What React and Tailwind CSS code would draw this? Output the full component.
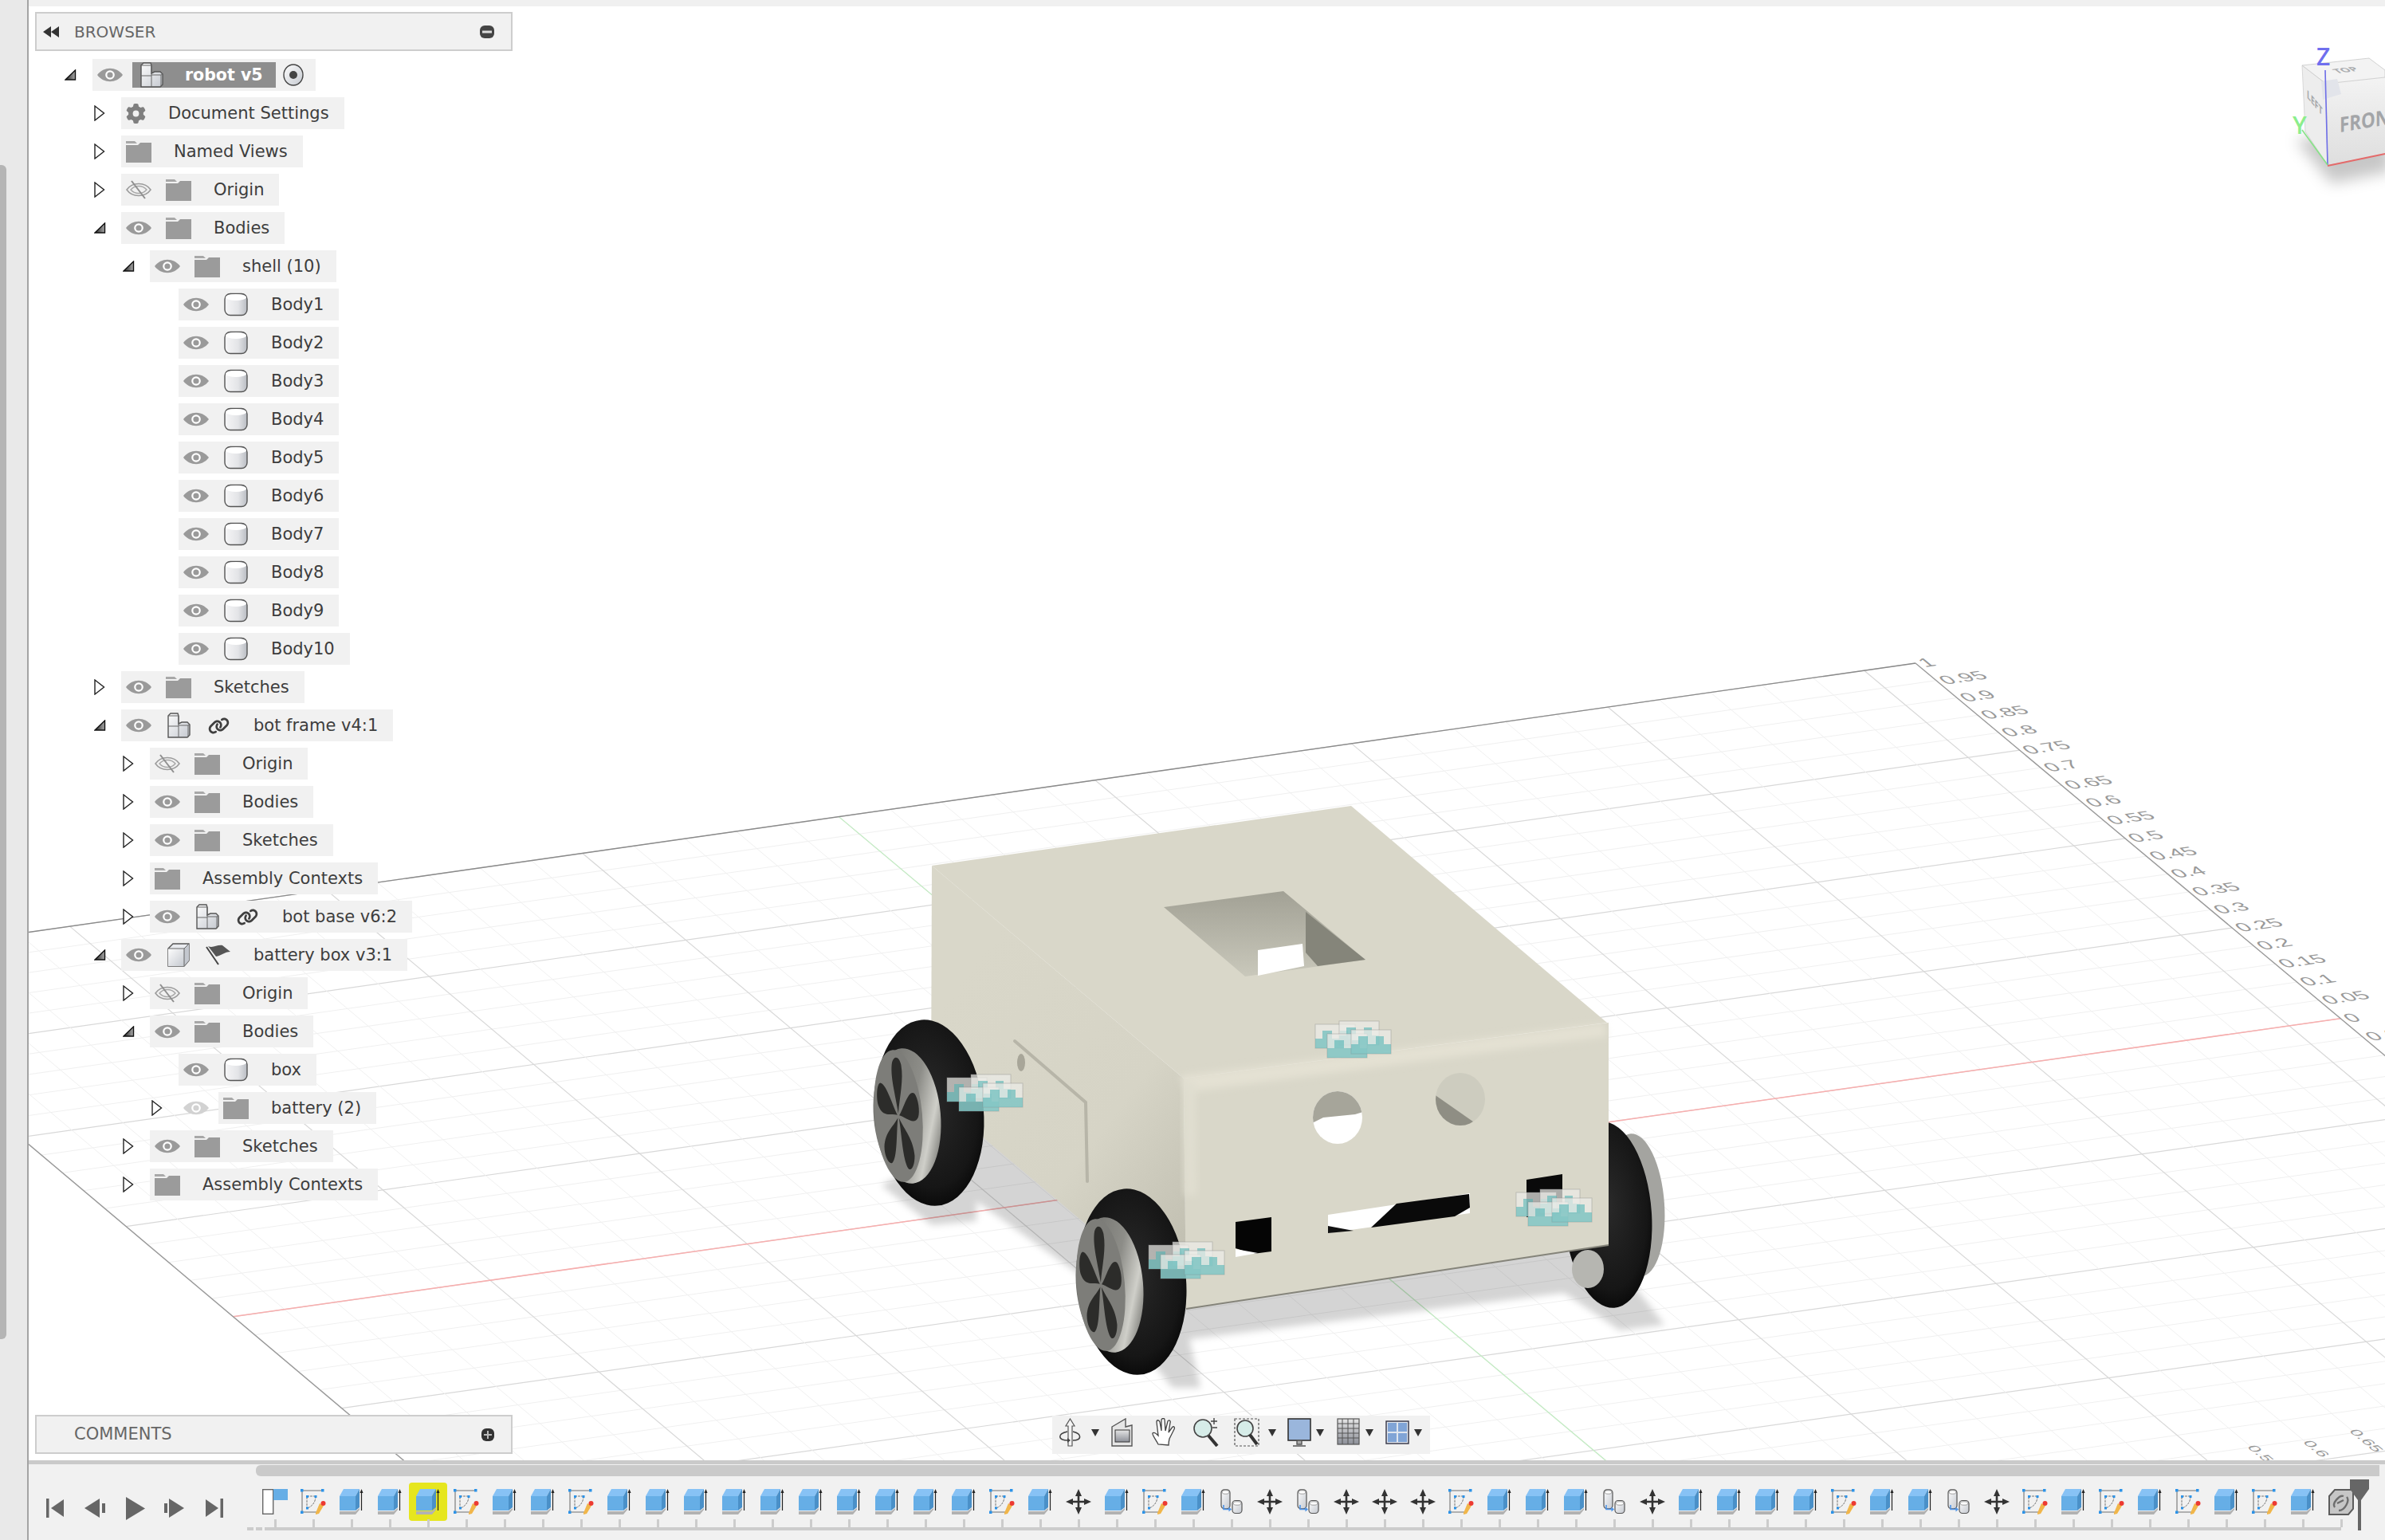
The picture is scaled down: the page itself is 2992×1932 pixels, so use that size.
import { FaGear, FaLink } from 'react-icons/fa6'

// ---- tree data ----
const TREE = [
  { lv: 0, arrow: 'open', root: true, label: 'robot v5' },
  { lv: 1, arrow: 'closed', icons: ['gear'], label: 'Document Settings' },
  { lv: 1, arrow: 'closed', icons: ['folder'], label: 'Named Views' },
  { lv: 1, arrow: 'closed', eye: 'off', icons: ['folder'], label: 'Origin' },
  { lv: 1, arrow: 'open', eye: 'on', icons: ['folder'], label: 'Bodies' },
  { lv: 2, arrow: 'open', eye: 'on', icons: ['folder'], label: 'shell (10)' },
  ...[1, 2, 3, 4, 5, 6, 7, 8, 9, 10].map((n) => ({ lv: 3, eye: 'on', icons: ['cyl'], label: `Body${n}` })),
  { lv: 1, arrow: 'closed', eye: 'on', icons: ['folder'], label: 'Sketches' },
  { lv: 1, arrow: 'open', eye: 'on', icons: ['comp', 'link'], label: 'bot frame v4:1' },
  { lv: 2, arrow: 'closed', eye: 'off', icons: ['folder'], label: 'Origin' },
  { lv: 2, arrow: 'closed', eye: 'on', icons: ['folder'], label: 'Bodies' },
  { lv: 2, arrow: 'closed', eye: 'on', icons: ['folder'], label: 'Sketches' },
  { lv: 2, arrow: 'closed', icons: ['folder'], label: 'Assembly Contexts' },
  { lv: 2, arrow: 'closed', eye: 'on', icons: ['comp', 'link'], label: 'bot base v6:2' },
  { lv: 1, arrow: 'open', eye: 'on', icons: ['cube', 'flag'], label: 'battery box v3:1' },
  { lv: 2, arrow: 'closed', eye: 'off', icons: ['folder'], label: 'Origin' },
  { lv: 2, arrow: 'open', eye: 'on', icons: ['folder'], label: 'Bodies' },
  { lv: 3, eye: 'on', icons: ['cyl'], label: 'box' },
  { lv: 3, arrow: 'closed', eye: 'dim', icons: ['folder'], label: 'battery (2)' },
  { lv: 2, arrow: 'closed', eye: 'on', icons: ['folder'], label: 'Sketches' },
  { lv: 2, arrow: 'closed', icons: ['folder'], label: 'Assembly Contexts' },
]

const INDENT = ['w-[80px]', 'w-[116px]', 'w-[152px]', 'w-[188px]']

// timeline: f flag, s sketch, e extrude, m move, j joint, l link
const STEPS = 'fseeeseeseeeeeeeeeesemesejmjmmmseeejmeeeeseejmsesesesel'.split('')

// ---- tree icons ----
function Arrow({ open }) {
  if (open) {
    return (
      <svg width="15" height="14" viewBox="0 0 15 14">
        <path d="M1 13 L13.5 1 V13 Z" fill="url(#arrowFill)" stroke="#111" strokeWidth="1.4" />
      </svg>
    )
  }
  return (
    <svg width="14" height="20" viewBox="0 0 14 20">
      <path d="M1 1 L12.5 10 L1 19 Z" fill="#fff" stroke="#222" strokeWidth="1.4" />
    </svg>
  )
}

function Eye({ state }) {
  if (state === 'off') {
    return (
      <svg width="32" height="24" viewBox="0 0 32 24" className="shrink-0">
        <path d="M1 12 C8 2 24 2 31 12 C24 22 8 22 1 12 Z" fill="none" stroke="#9c9c9c" strokeWidth="1.6" />
        <path d="M6 12 C11 6 21 6 26 12 C21 18 11 18 6 12 Z" fill="none" stroke="#a8a8a8" strokeWidth="1.4" />
        <path d="M7 1 L24 23" stroke="#8f8f8f" strokeWidth="2" />
      </svg>
    )
  }
  const c = state === 'dim' ? '#d2d2d2' : '#9a9a9a'
  return (
    <svg width="32" height="24" viewBox="0 0 32 24" className="shrink-0">
      <path d="M0 12 C8 1 24 1 32 12 C24 23 8 23 0 12 Z" fill={c} />
      <circle cx="16" cy="12" r="5.8" fill="#fff" />
      <circle cx="16" cy="12" r="3.6" fill={c} />
    </svg>
  )
}

function Folder() {
  return (
    <svg width="32" height="27" viewBox="0 0 32 27" className="shrink-0">
      <path d="M0 0 H11 L14 3 H0 Z" fill="#a8a8a8" />
      <path d="M0 5 H15 L18 2 H32 V27 H0 Z" fill="#9b9b9b" />
    </svg>
  )
}

function Cyl() {
  return (
    <svg width="32" height="30" viewBox="0 0 32 30" className="shrink-0">
      <rect x="2" y="1.5" width="28" height="27" rx="7" fill="url(#cylBody)" stroke="#555" strokeWidth="1.4" />
      <ellipse cx="16" cy="6" rx="13" ry="4" fill="#fff" />
    </svg>
  )
}

function Comp() {
  return (
    <svg width="32" height="32" viewBox="0 0 32 32" className="shrink-0">
      <path d="M3 4 L6 1 H15 L16 4 V14 L20 12 H27 L30 15 V28 L27 31 H3 Z" fill="url(#cylFill)" stroke="#555" strokeWidth="1.4" />
      <path d="M3 4 H16 M3 17 H16 M16 4 V31 M16 16 H28 V31 M28 16 L30 15" stroke="#666" strokeWidth="1" fill="none" />
    </svg>
  )
}

function Cube() {
  return (
    <svg width="32" height="30" viewBox="0 0 32 30" className="shrink-0">
      <path d="M3 7 L9 1 H29 V22 L23 29 H3 Z" fill="#e9ebef" stroke="#555" strokeWidth="1.4" />
      <path d="M3 7 H23 V29 H3 Z" fill="url(#cylFill)" />
      <path d="M23 7 L29 1 V22 L23 29 Z" fill="#c3c7ce" />
      <path d="M3 7 H23 V29 M23 7 L29 1" stroke="#666" strokeWidth="1" fill="none" />
    </svg>
  )
}

function Flag() {
  return (
    <svg width="32" height="26" viewBox="0 0 32 26" className="shrink-0">
      <path d="M1 3 L16 25" stroke="#444" strokeWidth="2" />
      <path d="M3 2 C9 5 14 0 21 1 L31 9 C24 9 19 14 13 15 Z" fill="#555" />
    </svg>
  )
}

function TreeIcon({ name }) {
  if (name === 'folder') return <Folder />
  if (name === 'cyl') return <Cyl />
  if (name === 'comp') return <Comp />
  if (name === 'cube') return <Cube />
  if (name === 'flag') return <Flag />
  if (name === 'gear') return <FaGear className="h-[27px] w-[25px] shrink-0 text-[#7f7f7f]" />
  return (
    <span className="flex w-8 shrink-0 justify-center">
      <FaLink className="h-[27px] w-[27px] text-[#3f3f3f]" />
    </span>
  )
}

function RootRow() {
  return (
    <div className="flex h-10 items-center">
      <div className="w-[80px] shrink-0 pl-[45px]">
        <Arrow open />
      </div>
      <div className="flex h-full items-center bg-[#f1f1f1] pl-1.5 pr-[15px]">
        <Eye state="on" />
        <div className="ml-3 flex h-8 w-[180px] items-center bg-[#8e8e8e] pl-2">
          <Comp />
          <span className="ml-[26px] text-[20.5px] font-bold text-white">robot v5</span>
        </div>
        <svg width="26" height="28" viewBox="0 0 26 28" className="ml-[9px]">
          <ellipse cx="13" cy="14" rx="12" ry="13" fill="url(#cylFill)" stroke="#444" strokeWidth="1.4" />
          <circle cx="13" cy="14" r="5" fill="#444" />
        </svg>
      </div>
    </div>
  )
}

function TreeRow({ row }) {
  if (row.root) return <RootRow />
  const dim = row.eye === 'dim'
  return (
    <div className="flex h-10 items-center">
      <div className={`${INDENT[row.lv]} flex shrink-0 items-center pl-[2px]`}>
        <div className="ml-auto w-[35px] pl-[1px]">{row.arrow && <Arrow open={row.arrow === 'open'} />}</div>
      </div>
      {dim && (
        <div className="ml-1.5 mr-3">
          <Eye state="dim" />
        </div>
      )}
      <div className="flex h-full items-center gap-[18px] bg-[#f1f1f1] pl-1.5 pr-[19px]">
        {row.eye && !dim && <Eye state={row.eye} />}
        {row.icons.map((ic, i) => (
          <TreeIcon key={i} name={ic} />
        ))}
        <span className="ml-2.5 mt-[2px] whitespace-nowrap text-[21px] text-[#3d3d3d]">{row.label}</span>
      </div>
    </div>
  )
}

// ---- timeline icons ----
function Extrude() {
  return (
    <svg width="32" height="32" viewBox="0 0 32 32">
      <path d="M1 9 L6 0 H26 L21 9 Z" fill="#87c2f5" />
      <path d="M1 9 H21 V27 H1 Z" fill="#66aee6" />
      <path d="M21 9 L26 0 V23 L21 27 Z" fill="#4a90c8" />
      <path d="M1 28 H21 L26 24 V26 L21 32 H1 Z" fill="#b2b2b2" />
      <path d="M28.5 3 V27" stroke="#222" strokeWidth="1.2" />
      <path d="M26.5 5 L28.5 0 L30.5 5 Z" fill="#222" />
    </svg>
  )
}

function SketchIcon() {
  return (
    <svg width="32" height="32" viewBox="0 0 32 32">
      <path d="M2 2 H27 M2 2 V29 M2 29 H20" stroke="#9a9a9a" strokeWidth="1.6" fill="none" />
      <path d="M8 9 H19 M8 10 V24 M9 24 C16 21 19 15 19 9" stroke="#777" strokeWidth="1" fill="none" strokeDasharray="3 1" />
      <rect x="0" y="0" width="3.5" height="3.5" fill="#2c93e8" />
      <rect x="26" y="0" width="3.5" height="3.5" fill="#2c93e8" />
      <rect x="0" y="27.5" width="3.5" height="3.5" fill="#2c93e8" />
      <rect x="7" y="8" width="3" height="3" fill="#2c93e8" />
      <rect x="17.5" y="8" width="3" height="3" fill="#2c93e8" />
      <rect x="7" y="22.5" width="3" height="3" fill="#2c93e8" />
      <path d="M19 30 L24 18 L29 21 L23 31 L19 32 Z" fill="#f1b64a" />
      <circle cx="28.5" cy="18" r="3" fill="#ec3a32" />
    </svg>
  )
}

function MoveIcon() {
  return (
    <svg width="32" height="32" viewBox="0 0 32 32">
      <path d="M16 0 L20 9 H17.3 V14.7 H23 V12 L32 16 L23 20 V17.3 H17.3 V23 H20 L16 32 L12 23 H14.7 V17.3 H9 V20 L0 16 L9 12 V14.7 H14.7 V9 H12 Z" fill="#333" />
    </svg>
  )
}

function JointIcon() {
  return (
    <svg width="32" height="32" viewBox="0 0 32 32">
      <rect x="3" y="0.8" width="11" height="24" rx="4" fill="url(#cylFill)" stroke="#555" strokeWidth="1.2" />
      <ellipse cx="8.5" cy="4" rx="4.5" ry="2.2" fill="#fff" stroke="#888" strokeWidth="0.8" />
      <rect x="17" y="14.5" width="12" height="16" rx="4" fill="url(#cylFill)" stroke="#555" strokeWidth="1.2" />
      <ellipse cx="23" cy="18" rx="5" ry="2.2" fill="#fff" stroke="#888" strokeWidth="0.8" />
      <path d="M6 20 V25.5 H13" stroke="#4e94e8" strokeWidth="1.6" fill="none" />
      <path d="M12.5 22.5 L16 25.5 L12.5 28.5 Z" fill="#4e94e8" />
    </svg>
  )
}

function LinkStep() {
  return (
    <svg width="34" height="34" viewBox="0 0 34 34">
      <path d="M2 9 L9 1 H32 V25 L26 32 H2 Z" fill="#c6c6c6" stroke="#5c5c5c" strokeWidth="2" />
      <path d="M9 23 C5 18 15 7 20 9 M14 27 C22 27 28 14 24 10 M12 18 L20 14" stroke="#6d6d6d" strokeWidth="2.4" fill="none" />
    </svg>
  )
}

function FlagStep() {
  return (
    <svg width="32" height="32" viewBox="0 0 32 32">
      <rect x="0.7" y="0.7" width="13" height="30.6" fill="#fff" stroke="#666" strokeWidth="1.4" />
      <rect x="14" y="0" width="18" height="14" fill="#66aee6" />
    </svg>
  )
}

const STEP_ICONS = { f: FlagStep, s: SketchIcon, e: Extrude, m: MoveIcon, j: JointIcon, l: LinkStep }

function Timeline() {
  return (
    <div className="flex h-[100px] shrink-0 border-t-[5px] border-[#cacaca] bg-[#f1f1f1]">
      <div className="flex w-[285px] shrink-0 items-center pl-[22px] pt-[15px]">
        <svg width="22" height="24" viewBox="0 0 22 24" className="fill-[#666]">
          <rect width="3.5" height="24" />
          <path d="M22 1 V23 L6 12 Z" />
        </svg>
        <svg width="26" height="24" viewBox="0 0 26 24" className="ml-[26px] fill-[#666]">
          <path d="M19 0 V24 L0 12 Z" />
          <rect x="22" y="6" width="4" height="12" />
        </svg>
        <svg width="24" height="29" viewBox="0 0 24 29" className="ml-[26px] fill-[#666]">
          <path d="M0 0 L24 14.5 L0 29 Z" />
        </svg>
        <svg width="25" height="24" viewBox="0 0 25 24" className="ml-6 fill-[#666]">
          <rect width="4" y="6" height="12" />
          <path d="M6 0 V24 L25 12 Z" />
        </svg>
        <svg width="22" height="24" viewBox="0 0 22 24" className="ml-[27px] fill-[#666]">
          <path d="M0 1 V23 L16 12 Z" />
          <rect x="18.5" width="3.5" height="24" />
        </svg>
      </div>
      <div className="relative min-w-0 flex-1">
        <div className="mr-[7px] mt-px h-[14px] rounded-l-md bg-[#cacaca]" />
        <div className="mt-4 flex">
          {STEPS.map((s, i) => {
            const Icon = STEP_ICONS[s]
            return (
              <div key={i} className="relative flex w-12 shrink-0 flex-col items-center">
                {i === 4 && <div className="absolute inset-x-0 -top-2 h-12 rounded-[4px] bg-[#e6e61e]" />}
                <div className="relative h-8">
                  <Icon />
                </div>
                <div className="relative mt-1.5 h-2.5 w-[3px] bg-[#cccccc]" />
              </div>
            )
          })}
        </div>
        <div className="-ml-[11px] flex gap-[3px]">
          <div className="h-1 w-2 bg-[#cccccc]" />
          <div className="h-1 w-2 bg-[#cccccc]" />
          <div className="h-1 w-[2605px] bg-[#cccccc]" />
        </div>
        {/* playhead */}
        <svg width="24" height="64" viewBox="0 0 24 64" className="absolute left-[2627px] top-[19px] fill-[#666]">
          <path d="M0 0 H24 V12 L14 26 V64 H10 V26 L0 12 Z" />
        </svg>
      </div>
    </div>
  )
}

// ---- nav bar ----
function Caret({ className }) {
  return (
    <svg width="10" height="10" viewBox="0 0 10 10" className={`${className} shrink-0 fill-[#333]`}>
      <path d="M0 1 H10 L5 10 Z" />
    </svg>
  )
}

function NavBar() {
  return (
    <div className="absolute bottom-2 left-[1284px] flex h-12 w-[474px] items-center bg-[#f1f1f1] pb-[6px] pl-2">
      <svg width="29" height="36" viewBox="0 0 29 36">
        <path d="M14.5 1 L20 10 H17 V35 H12 V10 H9 Z" fill="#f4f4f4" stroke="#555" strokeWidth="1.2" />
        <path d="M11 17 C-2 20 -1 28 12 28 M18 17 C30 20 29 28 18 28" stroke="#444" strokeWidth="1.6" fill="none" />
        <path d="M11 25 L15 28 L11 31 Z" fill="#444" />
      </svg>
      <Caret className="ml-3" />
      <svg width="28" height="36" viewBox="0 0 28 36" className="ml-[15px]">
        <path d="M1 11 L18 1 V11 L26 9 V35 H1 Z" fill="#e6e6e6" stroke="#555" strokeWidth="1.4" />
        <rect x="5" y="15" width="18" height="15" fill="url(#monoFill)" stroke="#333" />
      </svg>
      <svg width="32" height="36" viewBox="0 0 32 36" className="ml-[22px]">
        <path d="M9 33 C6 27 1 21 2 19 C4 17 7 20 9 22 L7 5 C7 2 10 2 11 5 L13 16 L13 2 C14 0 17 0 17 2 L18 16 L21 4 C22 2 25 3 24 6 L22 18 L27 11 C29 10 30 12 29 14 L23 26 C22 30 22 32 22 34 Z" fill="#fff" stroke="#444" strokeWidth="1.3" />
      </svg>
      <svg width="32" height="36" viewBox="0 0 32 36" className="ml-[21px]">
        <circle cx="12" cy="13" r="11" fill="#d6ece8" stroke="#444" strokeWidth="1.6" />
        <path d="M19 22 L30 35" stroke="#333" strokeWidth="4" />
        <path d="M22 4 H30 M26 0 V8 M24 12 H30" stroke="#444" strokeWidth="1.4" />
      </svg>
      <svg width="32" height="36" viewBox="0 0 32 36" className="ml-[19px]">
        <rect x="1" y="1" width="30" height="34" fill="none" stroke="#555" strokeWidth="1.2" strokeDasharray="3 2" />
        <circle cx="14" cy="13" r="10" fill="#d6ece8" stroke="#444" strokeWidth="1.6" />
        <path d="M20 21 L29 33" stroke="#333" strokeWidth="4" />
      </svg>
      <Caret className="ml-[11px]" />
      <svg width="30" height="36" viewBox="0 0 30 36" className="ml-[14px]">
        <rect x="1" y="1" width="28" height="27" fill="#9ab6dc" stroke="#333" strokeWidth="1.6" />
        <path d="M12 28 H18 V33 H12 Z M7 35 H23" fill="#aaa" stroke="#555" strokeWidth="1.4" />
      </svg>
      <Caret className="ml-1.5" />
      <svg width="29" height="36" viewBox="0 0 29 36" className="ml-4">
        <rect x="1" y="1" width="27" height="32" fill="url(#monoFill)" stroke="#555" strokeWidth="1.2" />
        <path d="M1 7 H28 M1 13 H28 M1 19 H28 M1 25 H28 M7 1 V33 M14 1 V33 M21 1 V33" stroke="#555" strokeWidth="1" />
      </svg>
      <Caret className="ml-[7px]" />
      <svg width="30" height="30" viewBox="0 0 30 30" className="ml-[15px]">
        <rect x="1" y="1" width="28" height="28" fill="#dfe5ee" stroke="#334" strokeWidth="1.4" />
        <rect x="3" y="3" width="11" height="11" fill="#80a4d6" />
        <rect x="16" y="3" width="11" height="11" fill="#80a4d6" />
        <rect x="3" y="16" width="11" height="11" fill="#80a4d6" />
        <rect x="16" y="16" width="11" height="11" fill="#80a4d6" />
      </svg>
      <Caret className="ml-1.5" />
    </div>
  )
}

// ---- 3d viewport drawing ----
const lerp = (a, b, t) => [a[0] + (b[0] - a[0]) * t, a[1] + (b[1] - a[1]) * t]
const A = [2403, 832]
const B = [-234, 1208]
const C = [3500, 1749]
const D = [849, 2121]
const persp = (j) => {
  const t = j / 40
  return (t * (1 - 0.054)) / (1 - 0.054 * t)
}

function Grid() {
  const lines = []
  for (let j = 0; j <= 40; j++) {
    const p = lerp(A, C, persp(j))
    const q = lerp(B, D, persp(j))
    const major = j % 5 === 0
    lines.push(
      <line key={`v${j}`} x1={p[0]} y1={p[1]} x2={q[0]} y2={q[1]} stroke={major ? '#d8d8d8' : '#f0f0f0'} strokeWidth={major ? 1.2 : 1} />,
    )
  }
  for (let i = 0; i <= 41; i++) {
    const p = lerp(A, B, i / 41)
    const q = lerp(C, D, i / 41)
    const major = i % 5 === 1
    lines.push(
      <line key={`u${i}`} x1={p[0]} y1={p[1]} x2={q[0]} y2={q[1]} stroke={major ? '#d8d8d8' : '#f0f0f0'} strokeWidth={major ? 1.2 : 1} />,
    )
  }
  const red0 = lerp(A, C, persp(20))
  const red1 = lerp(B, D, persp(20))
  const g0 = lerp(A, B, 21 / 41)
  const g1 = lerp(C, D, 21 / 41)
  return (
    <g>
      {lines}
      <line x1={g0[0]} y1={g0[1]} x2={g1[0]} y2={g1[1]} stroke="#c4f0c4" strokeWidth="1.2" />
      <line x1={red0[0]} y1={red0[1]} x2={red1[0]} y2={red1[1]} stroke="#f8aeae" strokeWidth="1.5" />
      <line x1={A[0]} y1={A[1]} x2={B[0]} y2={B[1]} stroke="#8a8a8a" strokeWidth="1.4" />
      <line x1={A[0]} y1={A[1]} x2={C[0]} y2={C[1]} stroke="#9a9a9a" strokeWidth="1.4" />
      <line x1={B[0]} y1={B[1]} x2={D[0]} y2={D[1]} stroke="#9a9a9a" strokeWidth="1.4" />
    </g>
  )
}

function RulerLabels() {
  const labels = []
  for (let j = 0; j <= 22; j++) {
    const n = Math.abs(20 - j) * 5
    const txt = n === 100 ? '1' : n === 0 ? '0' : n % 10 === 0 ? `0.${n / 10}` : `0.${n < 10 ? '0' : ''}${n}`
    const p = lerp(A, C, persp(j))
    labels.push(
      <text
        key={j}
        transform={`matrix(1 -0.142 0.6 0.5 ${p[0] + 12} ${p[1] + 5})`}
        fontFamily="'Liberation Sans', sans-serif"
        fontSize="28"
        fill="#999"
      >
        {txt}
      </text>,
    )
  }
  const front = [
    ['0.55', 2818, 1815],
    ['0.6', 2888, 1809],
    ['0.65', 2946, 1795],
  ]
  front.forEach(([txt, x, y]) => {
    labels.push(
      <text key={txt} transform={`matrix(0.62 0.5 -0.6 0.14 ${x} ${y})`} fontFamily="'Liberation Sans', sans-serif" fontSize="28" fill="#999">
        {txt}
      </text>,
    )
  })
  return <g>{labels}</g>
}

const PETALS = [0, 72, 144, 216, 288]

function Wheel({ dx, dy }) {
  return (
    <g transform={`translate(${dx} ${dy})`}>
      <ellipse cx="1420" cy="1608" rx="68" ry="117" transform="rotate(-5 1420 1608)" fill="url(#tyre)" />
      <ellipse cx="1392" cy="1612" rx="42" ry="85" transform="rotate(-5 1392 1612)" fill="url(#metal)" />
      <ellipse cx="1381" cy="1612" rx="30" ry="83" transform="rotate(-5 1381 1612)" fill="#7d7d79" />
      <g transform="translate(1381 1612) rotate(-5) scale(0.3 0.83)">
        {PETALS.map((a) => (
          <path
            key={a}
            transform={`rotate(${a + 8})`}
            d="M0 -4 C-8 -30 -30 -58 -18 -80 C-8 -92 12 -92 19 -80 C28 -58 8 -30 0 -4 Z"
            fill="#2c2c2a"
          />
        ))}
      </g>
    </g>
  )
}

function JointMark({ x, y }) {
  const offs = [
    [0, 4],
    [30, 0],
    [15, 16],
    [45, 11],
  ]
  return (
    <g transform={`translate(${x} ${y})`}>
      {offs.map(([ox, oy], i) => (
        <g key={i} transform={`translate(${ox} ${oy})`}>
          <rect x="0" y="0" width="50" height="30" fill="#ecece8" fillOpacity="0.72" stroke="#8a8a8a" strokeOpacity="0.4" />
          <path d="M0 30 V18 H9 V8 H21 V18 H31 V8 H41 V18 H50 V30 Z" fill="#4fb4b4" fillOpacity="0.58" />
        </g>
      ))}
    </g>
  )
}

function Car() {
  return (
    <g>
      {/* ground shadow */}
      <path
        d="M1106 1487 L1169 1537 L1225 1532 L1225 1507 L1359 1602 L1471 1741 L1506 1741 L1492 1680 L1962 1622 L1997 1645 L2032 1669 L2088 1662 L2053 1617 L2018 1540 L1232 1420 Z"
        fill="#000"
        fillOpacity="0.17"
        filter="url(#soft)"
      />
      {/* far wheel */}
      <ellipse cx="2052" cy="1512" rx="36" ry="90" transform="rotate(-4 2052 1512)" fill="#a4a4a0" />
      <ellipse cx="2017" cy="1524" rx="55" ry="117" transform="rotate(-4 2017 1524)" fill="url(#tyre)" />
      <ellipse cx="1992" cy="1592" rx="20" ry="24" fill="#b6b6b1" />
      {/* body */}
      <path d="M1169 1086 L1485 1353 L1488 1642 L1168 1372 Z" fill="url(#side)" strokeLinejoin="round" />
      <path d="M1485 1353 L2018 1283 L2018 1562 L1488 1642 Z" fill="#d9d7c9" />
      <path d="M1169 1086 L1695 1011 L2016 1283 L1485 1353 Z" fill="#d9d7c9" />
      {/* rolled edges */}
      <path d="M1480 1350 L2012 1284 L2016 1300 L1490 1370 Z" fill="#e4e1d3" filter="url(#soft3)" />
      <path d="M1484 1356 L1500 1356 L1502 1500 L1486 1500 Z" fill="#e0ded0" filter="url(#soft3)" />
      <path d="M1488 1642 L2018 1562" stroke="#85847a" strokeWidth="2" />
      {/* roof opening */}
      <path d="M1460 1138 L1610 1118 L1713 1204 L1562 1225 Z" fill="url(#well)" />
      <path d="M1638 1144 L1713 1204 L1653 1212 L1638 1195 Z" fill="#85857a" />
      <path d="M1578 1192 L1634 1184 L1636 1212 L1578 1224 Z" fill="#fff" />
      {/* side panel */}
      <path d="M1273 1306 L1362 1383 L1364 1482" stroke="#b7b5a8" strokeWidth="4" fill="none" strokeLinecap="round" />
      <ellipse cx="1281" cy="1333" rx="5" ry="11" fill="#a8a699" />
      {/* face */}
      <clipPath id="eyeL">
        <ellipse cx="1678" cy="1402" rx="31" ry="33" />
      </clipPath>
      <clipPath id="eyeR">
        <ellipse cx="1832" cy="1379" rx="31" ry="33" />
      </clipPath>
      <g clipPath="url(#eyeL)">
        <rect x="1640" y="1360" width="80" height="80" fill="#fff" />
        <path d="M1640 1360 H1720 V1392 L1700 1398 L1660 1402 L1640 1412 Z" fill="#a6a59a" />
      </g>
      <g clipPath="url(#eyeR)">
        <rect x="1795" y="1340" width="80" height="80" fill="#cdccbf" />
        <path d="M1795 1370 L1855 1412 H1795 Z" fill="#8f8e84" />
      </g>
      <path d="M1666 1524 L1844 1497 L1844 1522 L1666 1547 Z" fill="#fff" />
      <path d="M1752 1510 L1843 1498 L1844 1515 L1825 1526 L1720 1540 Z" fill="#0a0a0a" />
      <path d="M1666 1538 L1698 1544 L1666 1547 Z" fill="#111" />
      <path d="M1550 1533 L1595 1527 L1595 1570 L1572 1573 L1550 1566 Z" fill="#050505" />
      <path d="M1550 1567 L1578 1572 L1550 1577 Z" fill="#fff" />
      <path d="M1915 1480 L1960 1473 L1960 1522 L1915 1527 Z" fill="#0a0a0a" />
      <Wheel dx={-254} dy={-212} />
      <Wheel dx={0} dy={0} />
      <JointMark x={1650} y={1281} />
      <JointMark x={1188} y={1348} />
      <JointMark x={1441} y={1558} />
      <JointMark x={1902} y={1492} />
    </g>
  )
}

function ViewCube() {
  return (
    <g>
      <path d="M2880 175 L2925 230 L3000 215 L2995 160 Z" fill="#000" fillOpacity="0.22" filter="url(#soft2)" />
      <path d="M2918 105 L2992 97 V193 L2920 207 Z" fill="url(#cubeFace)" />
      <path d="M2888 82 L2918 105 L2920 207 L2892 165 Z" fill="#ededed" stroke="#cfcfcf" strokeWidth="0.8" />
      <path d="M2888 82 L2972 73 L2992 88 V97 L2918 105 Z" fill="#f3f3f3" stroke="#c8c8c8" strokeWidth="0.8" />
      <path d="M2912 102 L2932 99 L2937 118 L2914 125 Z" fill="#e2e4ea" />
      <text transform="matrix(0.86 -0.14 0 1 2935 166)" fontFamily="'Open Sans', sans-serif" fontWeight="700" fontSize="26" fill="#a3a5a8">
        FRONT
      </text>
      <text transform="matrix(0.62 0.75 0 1 2894 122)" fontFamily="'Open Sans', sans-serif" fontWeight="700" fontSize="14" fill="#a3a5a8">
        LEFT
      </text>
      <text transform="matrix(1 -0.12 0.7 0.5 2932 92)" fontFamily="'Open Sans', sans-serif" fontWeight="700" fontSize="14" fill="#a9abae">
        TOP
      </text>
      <path d="M2917 88 L2920 207" stroke="#6e6ee8" strokeWidth="1.6" />
      <path d="M2888 163 L2920 207" stroke="#86e486" strokeWidth="1.6" />
      <path d="M2920 208 L2992 193" stroke="#e46a6a" strokeWidth="2" />
      <text x="2906" y="82" fontFamily="'Open Sans', sans-serif" fontWeight="600" fontSize="30" fill="#6f6fee">
        Z
      </text>
      <text x="2876" y="168" fontFamily="'Open Sans', sans-serif" fontWeight="600" fontSize="30" fill="#8cee8c">
        Y
      </text>
    </g>
  )
}

function Canvas() {
  return (
    <svg width="2956" height="1824" viewBox="36 8 2956 1824" className="absolute inset-0">
      <defs>
        <linearGradient id="arrowFill" x1="0" x2="1">
          <stop offset="0" stopColor="#222" />
          <stop offset="1" stopColor="#aaa" />
        </linearGradient>
        <linearGradient id="cylFill" x1="0" x2="1" y1="0" y2="1">
          <stop offset="0" stopColor="#fdfdfd" />
          <stop offset="1" stopColor="#c5c9d0" />
        </linearGradient>
        <linearGradient id="cylBody" x1="0" x2="1" y1="0" y2="0">
          <stop offset="0" stopColor="#f6f6f7" />
          <stop offset="0.6" stopColor="#e3e4e7" />
          <stop offset="1" stopColor="#b9bcc2" />
        </linearGradient>
        <linearGradient id="monoFill" x1="0" x2="0" y1="0" y2="1">
          <stop offset="0" stopColor="#e5e5e5" />
          <stop offset="1" stopColor="#8c8f98" />
        </linearGradient>
        <radialGradient id="tyre" cx="0.5" cy="0.45" r="0.6">
          <stop offset="0" stopColor="#2a2a2a" />
          <stop offset="0.75" stopColor="#161616" />
          <stop offset="1" stopColor="#050505" />
        </radialGradient>
        <linearGradient id="metal" x1="0" x2="1" y1="0.2" y2="0.8">
          <stop offset="0" stopColor="#6c6c68" />
          <stop offset="0.55" stopColor="#8d8d88" />
          <stop offset="0.8" stopColor="#cfcfc9" />
          <stop offset="1" stopColor="#6c6c68" />
        </linearGradient>
        <linearGradient id="side" x1="0.2" x2="0.8" y1="0.2" y2="1">
          <stop offset="0" stopColor="#d9d7c9" />
          <stop offset="0.6" stopColor="#d6d4c6" />
          <stop offset="1" stopColor="#c2c0b2" />
        </linearGradient>
        <linearGradient id="well" x1="0" x2="0" y1="0" y2="1">
          <stop offset="0" stopColor="#a2a195" />
          <stop offset="1" stopColor="#c9c8bb" />
        </linearGradient>
        <linearGradient id="cubeFace" x1="0" x2="0" y1="0" y2="1">
          <stop offset="0" stopColor="#f3f3f3" />
          <stop offset="1" stopColor="#dedede" />
        </linearGradient>
        <filter id="soft" x="-10%" y="-10%" width="120%" height="120%">
          <feGaussianBlur stdDeviation="4" />
        </filter>
        <filter id="soft2" x="-40%" y="-40%" width="180%" height="180%">
          <feGaussianBlur stdDeviation="9" />
        </filter>
        <filter id="soft3" x="-20%" y="-20%" width="140%" height="140%">
          <feGaussianBlur stdDeviation="5" />
        </filter>
      </defs>
      <Grid />
      <RulerLabels />
      <Car />
      <ViewCube />
    </svg>
  )
}

function PanelHead({ children, right }) {
  return (
    <div className="ml-2 flex h-[49px] w-[599px] items-center border-[2px] border-[#cdcdcd] bg-[#f1f1f1] text-[20px] text-[#666]">
      {children}
      <div className="ml-auto mr-[21px]">{right}</div>
    </div>
  )
}

export default function App() {
  return (
    <div className="flex h-[1932px] w-[2992px] overflow-hidden bg-white font-['DejaVu_Sans',sans-serif]">
      {/* left gutter with scrollbar */}
      <div className="flex w-9 shrink-0 flex-col border-r-2 border-[#a4a4a4] bg-[#e9e9e9] pt-[207px]">
        <div className="h-[1473px] w-2 rounded-r-md bg-[#b5b5b5]" />
      </div>
      <div className="flex min-w-0 flex-1 flex-col">
        <div className="h-2 shrink-0 bg-[#f0f0f0]" />
        <div className="relative min-h-0 flex-1 overflow-hidden bg-white">
          <Canvas />
          <div className="absolute left-0 top-[7px]">
            <PanelHead
              right={
                <svg width="18" height="16" viewBox="0 0 18 16">
                  <rect width="18" height="16" rx="6" fill="#444" />
                  <rect x="3" y="6.5" width="12" height="3" fill="#ddd" />
                </svg>
              }
            >
              <svg width="20" height="14" viewBox="0 0 20 14" className="ml-2 fill-[#333]">
                <path d="M10 0 V14 L0 7 Z M20 0 V14 L10 7 Z" />
              </svg>
              <span className="ml-[19px]">BROWSER</span>
            </PanelHead>
            <div className="mt-2.5 flex flex-col gap-2">
              {TREE.map((row, i) => (
                <TreeRow key={i} row={row} />
              ))}
            </div>
          </div>
          <div className="absolute bottom-2 left-0">
            <PanelHead
              right={
                <svg width="16" height="16" viewBox="0 0 16 16">
                  <rect width="16" height="16" rx="6" fill="#333" />
                  <path d="M8 3 V13 M3 8 H13" stroke="#bbb" strokeWidth="2" />
                </svg>
              }
            >
              <span className="ml-[47px] text-[21px]">COMMENTS</span>
            </PanelHead>
          </div>
          <NavBar />
        </div>
        <Timeline />
      </div>
    </div>
  )
}
